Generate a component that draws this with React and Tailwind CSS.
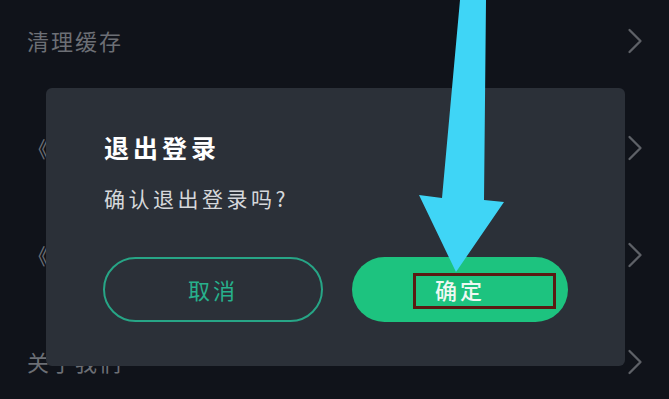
import React from 'react';

const Chevron = () => (
  <svg width="16" height="26" viewBox="0 0 16 26" fill="none">
    <path d="M2.5 2 L13.5 13 L2.5 24" stroke="#5e6167" strokeWidth="2.3" strokeLinecap="round" strokeLinejoin="round" />
  </svg>
);

// rows 2 and 3 are mostly hidden by the dialog, only the opening bracket peeks out
const rows = ['清理缓存', '《', '《', '关于我们'];

export default function App() {
  return (
    <div
      className="relative w-[669px] h-[399px] overflow-hidden bg-[#10131a]"
      style={{ fontFamily: '"Noto Sans CJK SC", "Noto Sans", sans-serif' }}
    >
      {/* settings list behind the dialog */}
      <div className="flex flex-col -mt-[13px]">
        {rows.map((label, i) => (
          <div key={i} className="h-[107px] flex items-center justify-between pl-[27px] pr-[26px]">
            <span className="text-[22px] tracking-[2px] text-[#6c6f75]">{label}</span>
            <Chevron />
          </div>
        ))}
      </div>

      {/* logout dialog */}
      <div className="absolute left-[46px] top-[88px] w-[579px] rounded-[6px] bg-[#2b3038] pt-[47px] pb-[44px]">
        <div className="pl-[58px]">
          <h2 className="text-[25px] leading-none font-bold tracking-[4px] text-white h-[25px]">退出登录</h2>
          <p className="mt-[28px] text-[21px] leading-none tracking-[3.5px] text-[#d6d8db] h-[22px]">确认退出登录吗?</p>
        </div>
        <div className="mt-[47px] flex gap-[29px] px-[57px]">
          <button className="flex-1 h-[65px] rounded-full border-2 border-[#27a586] text-[22px] tracking-[3px] text-[#27b08c]">
            取消
          </button>
          <button className="relative flex-1 h-[65px] rounded-full bg-[#1dc37f] text-[22px] font-medium tracking-[3px] text-[#eef8f2]">
            确定
            <span className="absolute left-[61px] right-[12px] top-[16px] bottom-[13px] border-[3px] border-[#5a1a12]" />
          </button>
        </div>
      </div>

      {/* annotation arrow */}
      <svg className="absolute inset-0 pointer-events-none" width="669" height="399" viewBox="0 0 669 399">
        <polygon
          points="460,0 486,0 484,200 504,202 456,272 419,195 442,198"
          fill="#3fd5f6"
        />
      </svg>
    </div>
  );
}
